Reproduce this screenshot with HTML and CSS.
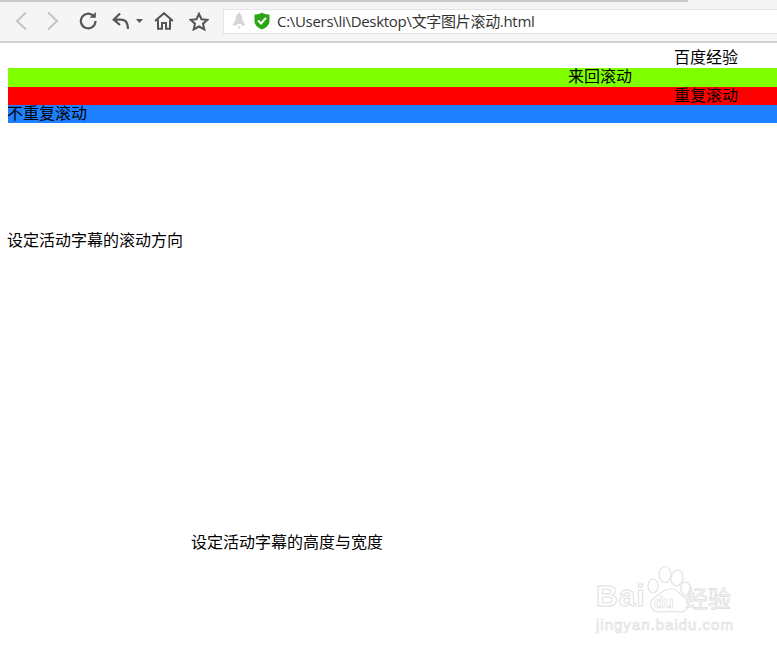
FILE: index.html
```html
<!DOCTYPE html>
<html lang="zh">
<head>
<meta charset="utf-8">
<title>文字图片滚动</title>
<link rel="stylesheet" href="styles.css">
</head>
<body>
<header class="toolbar">
  <div class="tabline"></div>
  <div class="navrow">
    <nav class="navicons">
      <svg class="ic back" width="14" height="20" viewBox="0 0 14 20"><path d="M12 1.500 L3 10 L12 18.500" fill="none" stroke="#c4c4c4" stroke-width="2"/></svg>
      <svg class="ic fwd" width="14" height="20" viewBox="0 0 14 20"><path d="M2 1.500 L11 10 L2 18.500" fill="none" stroke="#c4c4c4" stroke-width="2"/></svg>
      <svg class="ic reload" width="18" height="18" viewBox="0 0 18 18"><path d="M14.500 4 A7.300 7.300 0 1 0 16.500 9" fill="none" stroke="#555" stroke-width="2.200"/><path d="M10.500 5.800 H16.800 V0 Z" fill="#555"/></svg>
      <svg class="ic undo" width="18" height="18" viewBox="0 0 18 18"><path d="M8 1.500 L1.700 7.700 L8 13 M2 7.700 H9 C13.500 7.700 16 10.500 16 17" fill="none" stroke="#555" stroke-width="2.200"/></svg>
      <svg class="ic caret" width="7" height="4" viewBox="0 0 7 4"><path d="M0 0 H7 L3.500 4 Z" fill="#555"/></svg>
      <svg class="ic home" width="20" height="18" viewBox="0 0 20 18"><path d="M1 9 L10 1.200 L19 9 M4 7.500 V16.800 H8 V11 H12 V16.800 H16 V7.500" fill="none" stroke="#555" stroke-width="2"/></svg>
      <svg class="ic star" width="20" height="19" viewBox="0 0 20 19"><path d="M10 1.800 L12.500 7.200 L18.400 7.800 L14 11.700 L15.300 17.400 L10 14.500 L4.700 17.400 L6 11.700 L1.600 7.800 L7.500 7.200 Z" fill="none" stroke="#555" stroke-width="2"/></svg>
    </nav>
    <div class="address">
      <svg class="rocket" width="14" height="18" viewBox="0 0 14 18"><path d="M7 0 C9.500 2.500 10.500 5 10.500 8 L13.500 13.500 H9.500 L9 12 H5 L4.500 13.500 H0.500 L3.500 8 C3.500 5 4.500 2.500 7 0 Z M5.500 14.500 H8.500 L7 17.500 Z" fill="#d6d6d6"/></svg>
      <svg class="shield" width="16" height="18" viewBox="0 0 16 18"><path d="M8 0.500 C10 2 12.500 2.500 15.500 2.500 V9 C15.500 13 12 16 8 17.500 C4 16 0.500 13 0.500 9 V2.500 C3.500 2.500 6 2 8 0.500 Z" fill="#2aa515"/><path d="M4 8.500 L7 11.500 L12 5.800" fill="none" stroke="#fff" stroke-width="2"/></svg>
      <span class="url">C:\Users\li\Desktop\文字图片滚动.html</span>
    </div>
  </div>
</header>
<main class="page">
  <div class="row row-plain"><span class="label at-675">百度经验</span></div>
  <div class="row row-green"><span class="label at-569">来回滚动</span></div>
  <div class="row row-red"><span class="label at-675">重复滚动</span></div>
  <div class="row row-blue"><span class="label">不重复滚动</span></div>
  <p class="direction">设定活动字幕的滚动方向</p>
  <p class="size">设定活动字幕的高度与宽度</p>
</main>
<aside class="watermark">
  <svg class="paw" width="60" height="54" viewBox="0 0 60 54">
    <g fill="#fff" stroke="#e2e2e2" stroke-width="1.200">
      <ellipse cx="10" cy="21" rx="5" ry="7"/>
      <ellipse cx="22" cy="9.500" rx="6" ry="8"/>
      <ellipse cx="34" cy="13" rx="6" ry="8" transform="rotate(10 34 13)"/>
      <ellipse cx="43" cy="24" rx="5" ry="7" transform="rotate(-15 43 24)"/>
      <path d="M27 24 C35 24 37 30 42 33 C48 37 45 48 35 47 C29 46 25 46 19 47 C8 48 4 38 11 33 C17 30 19 24 27 24 Z"/>
    </g>
  </svg>
  <span class="wm-bai">Bai</span>
  <span class="wm-du">du</span>
  <span class="wm-jy">经验</span>
  <span class="wm-url">jingyan.baidu.com</span>
</aside>
</body>
</html>
```
FILE: styles.css
```css
* { box-sizing: border-box; }
html, body { margin: 0; padding: 0; }
body {
  width: 777px;
  height: 650px;
  overflow: hidden;
  background: #fff;
  color: #000;
  font-family: "Noto Sans CJK SC", "Liberation Sans", sans-serif;
  font-size: 16px;
  position: relative;
}
.toolbar {
  height: 43px;
  background: #f5f5f5;
  border-bottom: 2px solid #d2d2d2;
}
.tabline {
  width: 688px;
  height: 2px;
  background: #c8c8c8;
}
.navrow {
  display: flex;
  align-items: center;
  height: 38px;
}
.navicons {
  display: flex;
  align-items: center;
  width: 223px;
  padding-left: 14px;
}
.ic { display: block; flex: none; }
.fwd { margin-left: 18px; }
.reload { margin-left: 19px; }
.undo { margin-left: 15px; }
.caret { margin-left: 6px; }
.home { margin-left: 11px; }
.star { margin-left: 15px; }
.address {
  flex: 1;
  display: flex;
  align-items: center;
  height: 25px;
  background: #fff;
  border: 1px solid #e4e4e4;
  border-right: 0;
  padding-left: 8px;
}
.shield { margin-left: 8px; }
.url {
  margin-left: 7px;
  font-family: "Open Sans", "Noto Sans CJK SC", sans-serif;
  font-size: 15px;
  letter-spacing: -0.3px;
  line-height: 24px;
  color: #333;
  white-space: nowrap;
}
.page { padding: 6px 0 0 8px; }
.row {
  height: 18px;
  line-height: 15px;
  white-space: nowrap;
}
.row-plain { height: 19px; }
.row-green { height: 19px; background: #7fff00; }
.row-red { background: #ff0000; }
.row-blue { background: #1e7fff; }
.label { display: inline-block; margin-left: -1px; }
.at-675 { margin-left: 666px; }
.at-569 { margin-left: 560px; }
.direction, .size {
  margin: 0;
  line-height: 16px;
  margin-left: -1px;
}
.direction { margin-top: 108px; }
.size { margin-top: 286px; padding-left: 184px; }
.watermark {
  position: absolute;
  left: 594px;
  top: 565px;
  width: 142px;
  height: 68px;
  color: #fff;
  -webkit-text-stroke: 1px #e0e0e0;
}
.paw { position: absolute; left: 49px; top: 0; }
.wm-bai {
  position: absolute;
  left: 2px;
  top: 15px;
  font: bold 30px/32px "Liberation Sans", sans-serif;
  letter-spacing: 1px;
}
.wm-du {
  position: absolute;
  left: 60px;
  top: 29px;
  font: bold 16px/18px "Liberation Sans", sans-serif;
  -webkit-text-stroke: 0.6px #dcdcdc;
}
.wm-jy {
  position: absolute;
  left: 91px;
  top: 19px;
  font-size: 23px;
  line-height: 26px;
  white-space: nowrap;
  -webkit-text-stroke: 0.8px #dedede;
}
.wm-url {
  position: absolute;
  left: 2px;
  top: 51px;
  font: 15px/18px "Liberation Sans", sans-serif;
  letter-spacing: 1px;
  white-space: nowrap;
  -webkit-text-stroke: 0.7px #dedede;
}
```
